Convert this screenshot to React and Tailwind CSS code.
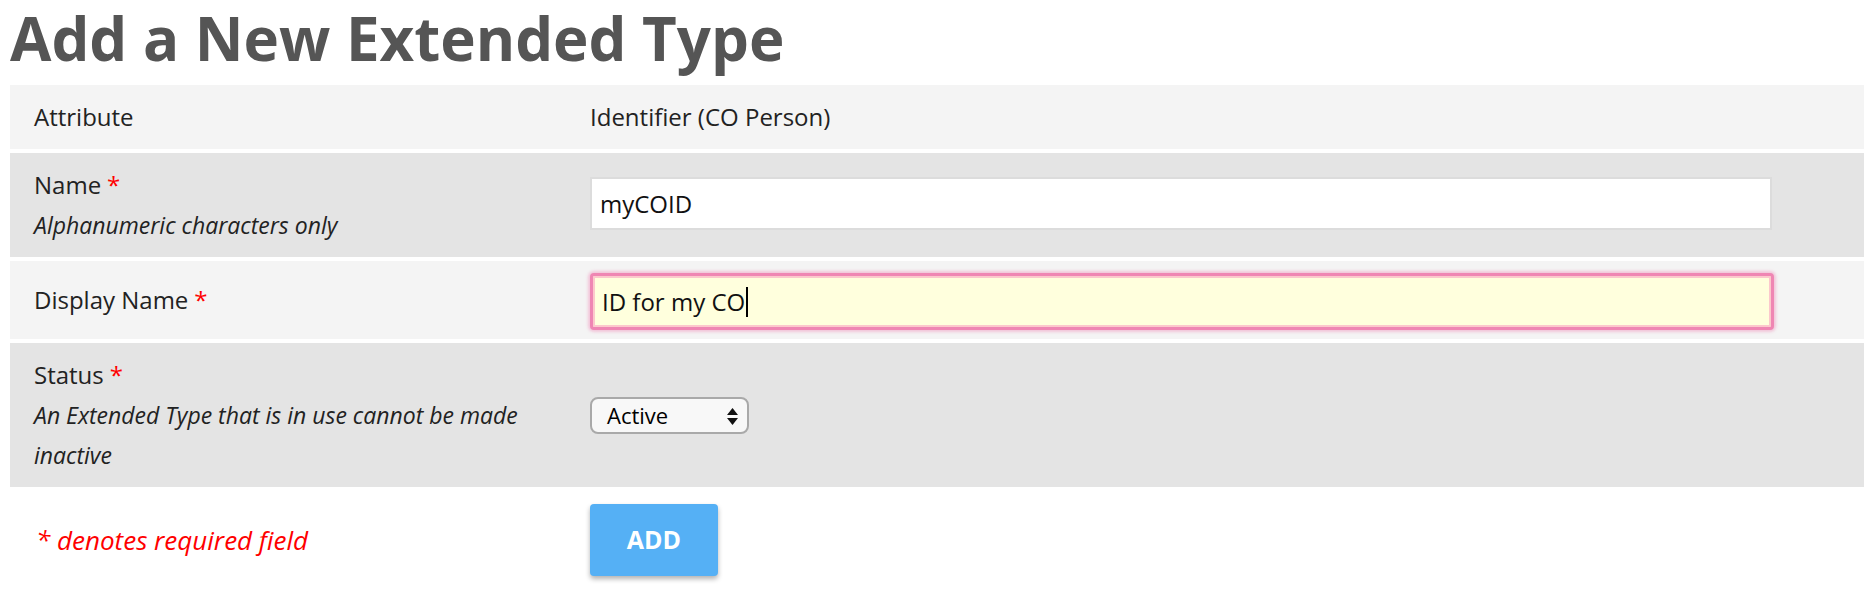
import React from 'react'

const font = { fontFamily: '"Open Sans", "Noto Sans", sans-serif' }

function Req() {
  return <span className="text-[#ff0000] ml-[6px]">*</span>
}

function Row({ shade, className = '', label, hint, children }) {
  return (
    <div className={`flex ${shade} ${className}`}>
      <div className="w-[580px] shrink-0 pl-[24px] pr-[30px] py-[12px] self-center">
        <div className="text-[24px] leading-[40px] text-[#222]">{label}</div>
        {hint && <div className="text-[23px] leading-[40px] italic text-[#222]">{hint}</div>}
      </div>
      <div className="flex-1 flex items-center">{children}</div>
    </div>
  )
}

export default function App() {
  return (
    <div className="min-h-screen bg-white pl-[10px] pr-[8px]" style={font}>
      <h1 className="text-[60px] leading-[70px] font-bold text-[#555] pt-[3px] pb-[12px]">
        Add a New Extended Type
      </h1>

      <div className="flex flex-col gap-[4px]">
        <Row shade="bg-[#f4f4f4]" label="Attribute">
          <span className="text-[24px] text-[#222]">Identifier (CO Person)</span>
        </Row>

        <Row
          shade="bg-[#e4e4e4]"
          label={<>Name<Req /></>}
          hint="Alphanumeric characters only"
        >
          <div className="w-[1182px] h-[53px] mb-[3px] bg-white border-2 border-[#dcdcdc] flex items-center pl-[8px] text-[24px] text-[#111]">
            myCOID
          </div>
        </Row>

        <Row shade="bg-[#f4f4f4]" className="h-[78px]" label={<>Display Name<Req /></>}>
          <div className="w-[1184px] h-[57px] mt-[3px] bg-[#ffffdd] border-[3px] border-[#ef86b3] rounded-[4px] shadow-[inset_0_0_0_2px_#fcc8cc,0_0_3px_2px_rgba(240,140,185,0.45)] flex items-center pl-[9px] text-[24px] text-[#111]">
            ID for my CO
            <span className="inline-block w-[2px] h-[30px] bg-black ml-[1px]" />
          </div>
        </Row>

        <Row
          shade="bg-[#e4e4e4]"
          label={<>Status<Req /></>}
          hint="An Extended Type that is in use cannot be made inactive"
        >
          <div className="relative w-[159px] h-[37px] rounded-[8px] border-2 border-[#a9a9a9] bg-[#f8f8f8] flex items-center pl-[15px] text-[22px] text-black">
            Active
            <svg className="absolute right-[9px] top-[9px]" width="11" height="17" viewBox="0 0 11 17">
              <path d="M5.5 0 L11 7 L0 7 Z" fill="#111" />
              <path d="M0 10 L11 10 L5.5 17 Z" fill="#111" />
            </svg>
          </div>
        </Row>
      </div>

      <div className="flex items-center mt-[17px]">
        <div className="w-[580px] shrink-0 pl-[26px] text-[26px] italic text-[#ff0000]">
          * denotes required field
        </div>
        <button className="w-[128px] h-[72px] rounded-[4px] bg-[#55b0f5] text-white text-[25px] font-bold shadow-[0_3px_5px_rgba(0,0,0,0.3)]">
          ADD
        </button>
      </div>
    </div>
  )
}
